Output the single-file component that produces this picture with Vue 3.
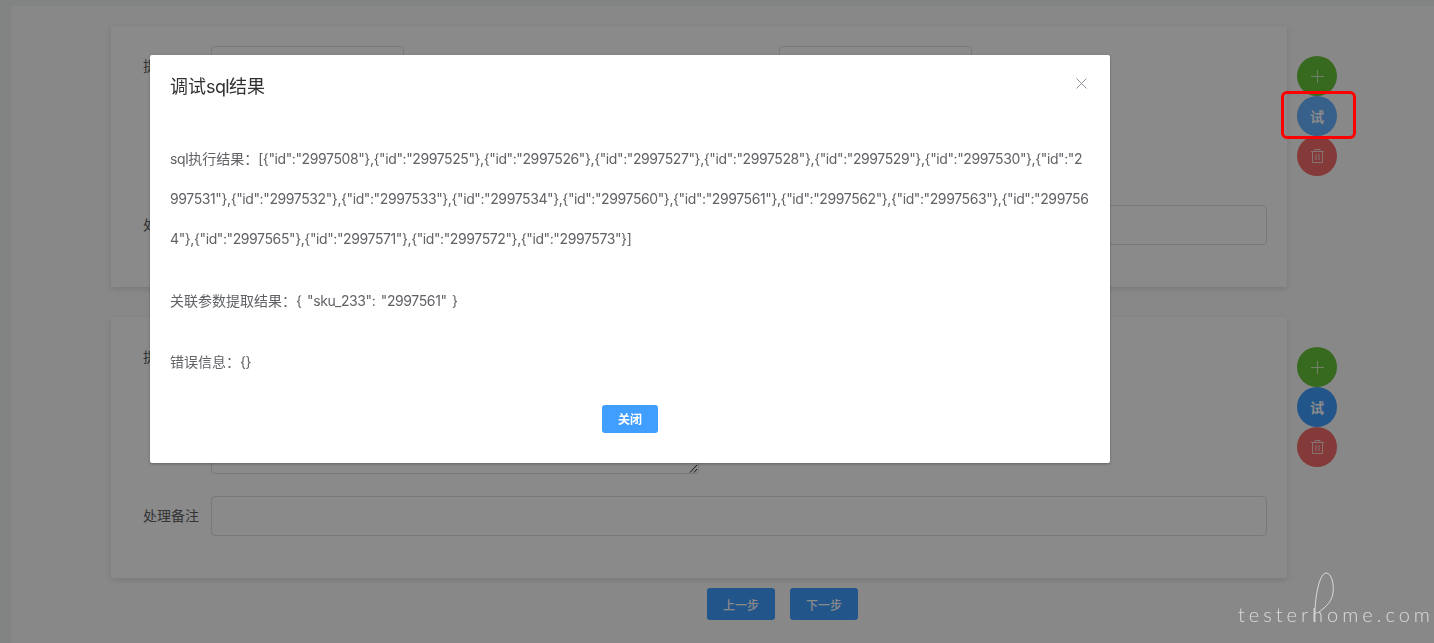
<script setup>
const cards = [
  { id: 1, focused: true },
  { id: 2, focused: false }
]
const result = '[{"id":"2997508"},{"id":"2997525"},{"id":"2997526"},{"id":"2997527"},{"id":"2997528"},{"id":"2997529"},{"id":"2997530"},{"id":"2997531"},{"id":"2997532"},{"id":"2997533"},{"id":"2997534"},{"id":"2997560"},{"id":"2997561"},{"id":"2997562"},{"id":"2997563"},{"id":"2997564"},{"id":"2997565"},{"id":"2997571"},{"id":"2997572"},{"id":"2997573"}]'
</script>

<template>
  <div class="page">
    <div class="inner">
      <div v-for="card in cards" :key="card.id" class="row">
        <section class="card">
          <div class="field">
            <label class="lbl">提</label>
            <div class="input short"></div>
            <label class="lbl second"></label>
            <div class="input short"></div>
          </div>
          <div class="field">
            <label class="lbl"></label>
            <div class="textarea">
              <svg class="grip" width="9" height="9" viewBox="0 0 9 9"><path d="M1 8.5L8 1M5 8.5L8 5" stroke="#222" fill="none" stroke-width="1"/></svg>
            </div>
          </div>
          <div class="field">
            <label class="lbl">处理备注</label>
            <div class="input wide"></div>
          </div>
        </section>
        <div class="actions">
          <button class="fab green">
            <svg class="ico" width="13" height="13" viewBox="0 0 13 13"><path d="M6.5 0v13M0 6.5h13" stroke="currentColor" fill="none" stroke-width="1"/></svg>
          </button>
          <button class="fab blue" :class="{ light: card.focused }">试</button>
          <button class="fab red">
            <svg class="ico" width="13" height="14" viewBox="0 0 13 14"><path d="M0 2.5h13M4 2.5V.5h5v2M1.5 2.5v11h10v-11M5 5v6M8 5v6" stroke="currentColor" fill="none" stroke-width="1"/></svg>
          </button>
        </div>
      </div>
      <div class="steps">
        <button class="step">上一步</button>
        <button class="step">下一步</button>
      </div>
    </div>
  </div>

  <div class="overlay"></div>
  <span class="annot"></span>

  <div class="dialog-wrap">
    <div class="dialog">
      <header class="dlg-head">
        <h2>调试<span class="latin">sql</span>结果</h2>
        <svg class="close" width="11" height="11" viewBox="0 0 11 11"><path d="M.5.5l10 10M10.5.5l-10 10" stroke="#909399" fill="none" stroke-width="1"/></svg>
      </header>
      <div class="dlg-body">
        <p><span class="val">sql</span>执行结果：<span class="val">{{ result }}</span></p>
        <p>关联参数提取结果：<span class="val spaced">{ "sku_233": "2997561" }</span></p>
        <p>错误信息：<span class="val">{}</span></p>
      </div>
      <footer class="dlg-foot"><button class="ok">关闭</button></footer>
    </div>
  </div>

  <div class="mark">
    <svg width="40" height="52" viewBox="0 0 40 52"><path d="M17 50C16 32 20 2 28 1c6 0 8 12 7 20-1 8-7 14-14 19" stroke="currentColor" fill="none" stroke-width="1"/></svg>
    <span>testerhome.com</span>
  </div>
</template>

<style>
html, body { margin: 0; background: #eef4f1; overflow: hidden; }
</style>

<style scoped>
.page {
  height: 643px;
  box-sizing: border-box;
  padding: 6px 0 0 11px;
  font-family: "Liberation Sans", "Noto Sans CJK SC", sans-serif;
  font-size: 14px;
  color: #606266;
}
.inner {
  height: 637px;
  box-sizing: border-box;
  padding: 20px 0 0 100px;
  background: #fbfbfb;
}
.row { display: flex; margin-bottom: 30px; }
.row:nth-child(2) { margin-bottom: 10px; }
.card {
  width: 1176px;
  height: 261px;
  box-sizing: border-box;
  padding: 20px 20px 0 32px;
  background: #fff;
  box-shadow: 0 2px 6px rgba(0, 0, 0, .12);
  border-radius: 2px;
}
.field { display: flex; align-items: center; margin-bottom: 22px; }
.lbl { width: 68px; flex: none; padding-bottom: 2px; }
.lbl.second { margin-left: 307px; }
.input {
  height: 40px;
  box-sizing: border-box;
  border: 1px solid #dcdfe6;
  border-radius: 4px;
  background: #fff;
}
.short { width: 193px; }
.wide { flex: 1; }
.textarea {
  position: relative;
  width: 488px;
  height: 75px;
  box-sizing: border-box;
  border: 1px solid #dcdfe6;
  border-radius: 4px;
}
.grip { position: absolute; right: 0; bottom: 0; }
.actions { display: flex; flex-direction: column; margin: 30px 0 0 10px; }
.fab {
  width: 40px;
  height: 40px;
  padding: 0;
  border: 0;
  border-radius: 50%;
  color: #fff;
  font: 700 14px "Liberation Sans", "Noto Sans CJK SC", sans-serif;
  display: flex;
  align-items: center;
  justify-content: center;
}
.ico { opacity: .7; }
.green { background: #67c23a; }
.blue { background: #409eff; }
.blue.light { background: #66b1ff; }
.red { background: #f56c6c; }
.steps { display: flex; gap: 15px; padding-left: 596px; }
.step {
  width: 68px;
  height: 32px;
  border: 0;
  border-radius: 3px;
  background: #409eff;
  color: #fff;
  font: 500 12px "Liberation Sans", "Noto Sans CJK SC", sans-serif;
}
.overlay { position: fixed; inset: 0; background: rgba(0, 0, 0, .46); }
.annot {
  position: fixed;
  left: 1281px;
  top: 91px;
  width: 75px;
  height: 48px;
  box-sizing: border-box;
  border: 3px solid #fe0000;
  border-radius: 6px;
}
.dialog-wrap { position: fixed; inset: 0; display: flex; align-items: flex-start; padding: 55px 0 0 150px; box-sizing: border-box; }
.dialog {
  width: 960px;
  height: 408px;
  box-sizing: border-box;
  background: #fff;
  border-radius: 2px;
  box-shadow: 0 1px 3px rgba(0, 0, 0, .3);
  font-family: Inter, "Noto Sans CJK SC", sans-serif;
}
.dlg-head { position: relative; padding: 20px 20px 10px; }
.dlg-head h2 { margin: 0; font-size: 18px; font-weight: 400; line-height: 24px; color: #303133; }
.latin { letter-spacing: -.6px; }
.close { position: absolute; top: 23px; right: 23px; }
.dlg-body { padding: 30px 20px 0; font-size: 14px; color: #606266; line-height: 40px; }
.dlg-body p { margin: 0 0 21.5px; word-break: break-all; }
.val { letter-spacing: -.4px; }
.spaced { word-spacing: 2px; }
.dlg-foot { display: flex; justify-content: center; }
.ok {
  width: 56px;
  height: 28px;
  margin-top: 1px;
  border: 0;
  border-radius: 3px;
  background: #409eff;
  color: #fff;
  font: 700 12px "Liberation Sans", "Noto Sans CJK SC", sans-serif;
}
.mark {
  position: fixed;
  left: 1238px;
  top: 572px;
  width: 196px;
  height: 60px;
  color: rgba(255, 255, 255, .68);
}
.mark svg { position: absolute; left: 60px; top: 0; }
.mark span {
  position: absolute;
  left: 0;
  top: 30px;
  font: 300 20px "Lato", sans-serif;
  letter-spacing: 4px;
  white-space: nowrap;
}
</style>
